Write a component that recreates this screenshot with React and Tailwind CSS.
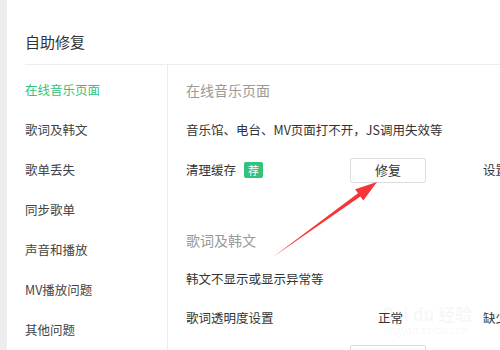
import React from "react";

const navItems = [
  "在线音乐页面",
  "歌词及韩文",
  "歌单丢失",
  "同步歌单",
  "声音和播放",
  "MV播放问题",
  "其他问题",
];

const font = { fontFamily: '"Microsoft YaHei", "Noto Sans CJK SC", sans-serif' };

const FixButton = ({ className = "" }) => (
  <button
    className={`h-[25px] w-[76px] rounded-[2px] border border-[#dcdcdc] bg-white text-[13px] text-[#333] ${className}`}
  >
    修复
  </button>
);

const Arrow = () => (
  <svg
    className="pointer-events-none absolute left-0 top-0"
    width="500"
    height="350"
    viewBox="0 0 500 350"
  >
    <polygon
      points="273,257 358,193.3 355.1,189.2 377,182 363.3,200.6 360.4,196.5"
      fill="#f53636"
    />
  </svg>
);

const App = () => {
  return (
    <div
      className="relative flex h-[350px] w-[500px] overflow-hidden bg-white"
      style={font}
    >
      <div className="w-[7px] shrink-0 bg-[#ededed]" />

      {/* faint watermark sits under the content */}
      <div className="pointer-events-none absolute left-[382px] top-[304px] flex flex-col items-center text-[#000]/[0.05]">
        <span className="text-[17px] font-bold leading-[20px]">Bai du 经验</span>
        <span className="text-[10px] leading-[12px]">jingyan.baidu.com</span>
      </div>

      <div className="relative flex flex-1 flex-col pl-[18px]">
        <div className="flex h-[65px] shrink-0 items-center border-b border-[#ececec] pt-[20px] text-[15px] text-[#333]">
          自助修复
        </div>

        <div className="flex flex-1">
          <nav className="w-[143px] shrink-0 border-r border-[#ececec] pt-[5px]">
            {navItems.map((item, i) => (
              <div
                key={item}
                className={`flex h-[40px] items-center text-[12.5px] ${
                  i === 0 ? "text-[#31c27c]" : "text-[#444]"
                }`}
              >
                {item}
              </div>
            ))}
          </nav>

          <main className="flex-1 pl-[18px] pt-[5px] text-[12.5px] text-[#333]">
            <div className="flex h-[40px] items-center text-[14px] text-[#999]">
              在线音乐页面
            </div>
            <div className="flex h-[40px] items-center whitespace-nowrap">
              音乐馆、电台、MV页面打不开，JS调用失效等
            </div>
            <div className="flex h-[40px] items-center whitespace-nowrap">
              <div className="flex w-[164px] items-center">
                <span>清理缓存</span>
                <span className="ml-[8px] flex h-[16px] w-[19px] items-center justify-center rounded-[2px] bg-[#31c27c] text-[11px] text-white">
                  荐
                </span>
              </div>
              <FixButton />
              <span className="ml-[57px]">设置</span>
            </div>

            <div className="mt-[30px] flex h-[40px] items-center text-[14px] text-[#999]">
              歌词及韩文
            </div>
            <div className="flex h-[38px] items-center whitespace-nowrap">
              韩文不显示或显示异常等
            </div>
            <div className="flex h-[40px] items-center whitespace-nowrap">
              <span className="w-[192px]">歌词透明度设置</span>
              <span className="w-[105px]">正常</span>
              <span>缺少</span>
            </div>
            <div className="pl-[164px] pt-[7px]">
              <FixButton />
            </div>
          </main>
        </div>
      </div>

      <Arrow />
    </div>
  );
};

export default App;
